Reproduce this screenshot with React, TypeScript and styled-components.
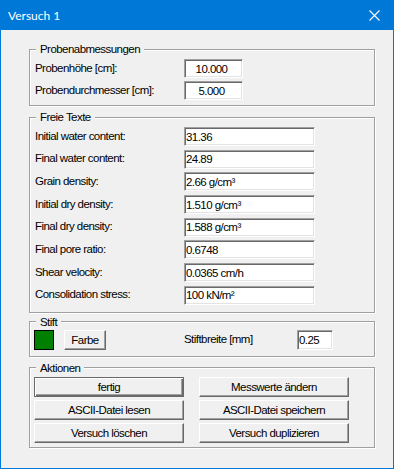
import React from 'react'
import styled, { createGlobalStyle } from 'styled-components'

const GlobalStyle = createGlobalStyle`
    html, body {
        margin: 0;
        padding: 0;
        background: #f0f0f0;
    }
`

const Window = styled.div`
    box-sizing: border-box;
    width: 394px;
    height: 469px;
    display: flex;
    flex-direction: column;
    background: #f0f0f0;
    border: 1px solid #0078d7;
    border-top: none;
    font-family: "Liberation Sans", Arial, sans-serif;
    font-size: 11.5px;
    letter-spacing: -0.55px;
    color: #000;
`

const TitleBar = styled.div`
    height: 30px;
    margin: 0 -1px;
    padding: 0 14px 0 8px;
    display: flex;
    align-items: center;
    justify-content: space-between;
    background: #0078d7;
    color: #fff;
    font-family: Lato, "Liberation Sans", sans-serif;
    font-size: 12px;
    letter-spacing: 0;
`

const Body = styled.div`
    display: flex;
    flex-direction: column;
    padding: 12px 0 0 28px;
`

interface GroupProps {
    gapTop?: number
    padTop?: number
    padBottom?: number
}

const Group = styled.fieldset<GroupProps>`
    box-sizing: border-box;
    width: 346px;
    margin: ${ props => props.gapTop || 0 }px 0 0 0;
    padding: ${ props => props.padTop || 0 }px 5px ${ props => props.padBottom || 0 }px 5px;
    min-width: 0;
    border: 1px solid #a0a0a0;
    box-shadow: inset 1px 1px 0 #fff, 1px 1px 0 #fff;
`

const Legend = styled.legend`
    margin-left: 1px;
    padding: 0 4px;
    line-height: 14px;
    background: #f0f0f0;
`

interface RowsProps {
    step: number
    inputWidth: number
}

const Rows = styled.div<RowsProps>`
    display: grid;
    grid-template-columns: 149px ${ props => props.inputWidth }px;
    row-gap: ${ props => props.step }px;
    align-items: center;
`

const Label = styled.div`
    line-height: 14px;
    margin-top: -2px;
    white-space: nowrap;
`

interface FieldProps {
    width?: number
    height?: number
    centered?: boolean
}

const Field = styled.div<FieldProps>`
    box-sizing: border-box;
    width: ${ props => props.width ? props.width + 'px' : 'auto' };
    height: ${ props => props.height || 19 }px;
    padding: 0 ${ props => props.centered ? 6 : 1 }px 0 ${ props => props.centered ? 2 : 1 }px;
    display: flex;
    align-items: center;
    justify-content: ${ props => props.centered ? 'center' : 'flex-start' };
    background: #fff;
    border: 1px solid;
    border-color: #a0a0a0 #fff #fff #a0a0a0;
    box-shadow: inset 1px 1px 0 #696969, inset -1px -1px 0 #e3e3e3;
    white-space: nowrap;
`

const PenRow = styled.div`
    display: grid;
    grid-template-columns: 30px 120px 113px 36px;
    align-items: center;
    margin-left: -1px;
    height: 22px;
`

const Swatch = styled.div`
    box-sizing: border-box;
    width: 20px;
    height: 20px;
    background: #008000;
    border: 1px solid #000;
`

interface ButtonProps {
    isDefault?: boolean
}

const Button = styled.button<ButtonProps>`
    box-sizing: border-box;
    height: 20px;
    margin: 0;
    padding: 0;
    font: inherit;
    letter-spacing: inherit;
    color: #000;
    background: #f0f0f0;
    border: 1px solid;
    border-color: ${ props => props.isDefault ? '#696969' : '#fff #696969 #696969 #fff' };
    box-shadow: ${ props => props.isDefault
        ? 'inset 1px 1px 0 #fff, inset -1px -1px 0 #696969, inset -2px -2px 0 #a0a0a0'
        : 'inset -1px -1px 0 #a0a0a0' };
`

const ColorButton = styled(Button)`
    width: 42px;
`

const ActionGrid = styled.div`
    display: grid;
    grid-template-columns: 150px 150px;
    column-gap: 15px;
    row-gap: 3px;
    margin-left: -1px;
`

const freeTexts = [
    { label: 'Initial water content:', value: '31.36' },
    { label: 'Final water content:', value: '24.89' },
    { label: 'Grain density:', value: '2.66 g/cm³' },
    { label: 'Initial dry density:', value: '1.510 g/cm³' },
    { label: 'Final dry density:', value: '1.588 g/cm³' },
    { label: 'Final pore ratio:', value: '0.6748' },
    { label: 'Shear velocity:', value: '0.0365 cm/h' },
    { label: 'Consolidation stress:', value: '100 kN/m²' },
]

const actions = [
    'fertig', 'Messwerte ändern',
    'ASCII-Datei lesen', 'ASCII-Datei speichern',
    'Versuch löschen', 'Versuch duplizieren',
]

const CloseIcon = () =>
    <svg width="11" height="11" viewBox="0 0 11 11">
        <path d="M0.5 0.5 L10.5 10.5 M10.5 0.5 L0.5 10.5" stroke="#fff" strokeWidth="1.1" fill="none" />
    </svg>

const App: React.FC = () => {
    return (
        <>
            <GlobalStyle />
            <Window>
                <TitleBar>
                    <span>Versuch 1</span>
                    <CloseIcon />
                </TitleBar>

                <Body>
                    <Group padTop={ 3 } padBottom={ 5 }>
                        <Legend>Probenabmessungen</Legend>
                        <Rows step={ 3 } inputWidth={ 59 }>
                            <Label>Probenhöhe [cm]:</Label>
                            <Field width={ 59 } centered>10.000</Field>
                            <Label>Probendurchmesser [cm]:</Label>
                            <Field width={ 59 } centered>5.000</Field>
                        </Rows>
                    </Group>

                    <Group gapTop={ 4 } padTop={ 3 } padBottom={ 7 }>
                        <Legend>Freie Texte</Legend>
                        <Rows step={ 3.7 } inputWidth={ 131 }>
                            {
                                freeTexts.map((item, index) =>
                                    <React.Fragment key={ index }>
                                        <Label>{ item.label }</Label>
                                        <Field width={ 131 }>{ item.value }</Field>
                                    </React.Fragment>
                                )
                            }
                        </Rows>
                    </Group>

                    <Group gapTop={ 2 } padTop={ 0 } padBottom={ 5 }>
                        <Legend>Stift</Legend>
                        <PenRow>
                            <Swatch />
                            <ColorButton>Farbe</ColorButton>
                            <Label>Stiftbreite [mm]</Label>
                            <Field width={ 36 } height={ 20 }>0.25</Field>
                        </PenRow>
                    </Group>

                    <Group gapTop={ 4 } padTop={ 2 } padBottom={ 4 }>
                        <Legend>Aktionen</Legend>
                        <ActionGrid>
                            {
                                actions.map((name, index) =>
                                    <Button key={ index } isDefault={ index === 0 }>{ name }</Button>
                                )
                            }
                        </ActionGrid>
                    </Group>
                </Body>
            </Window>
        </>
    )
}

export default App
